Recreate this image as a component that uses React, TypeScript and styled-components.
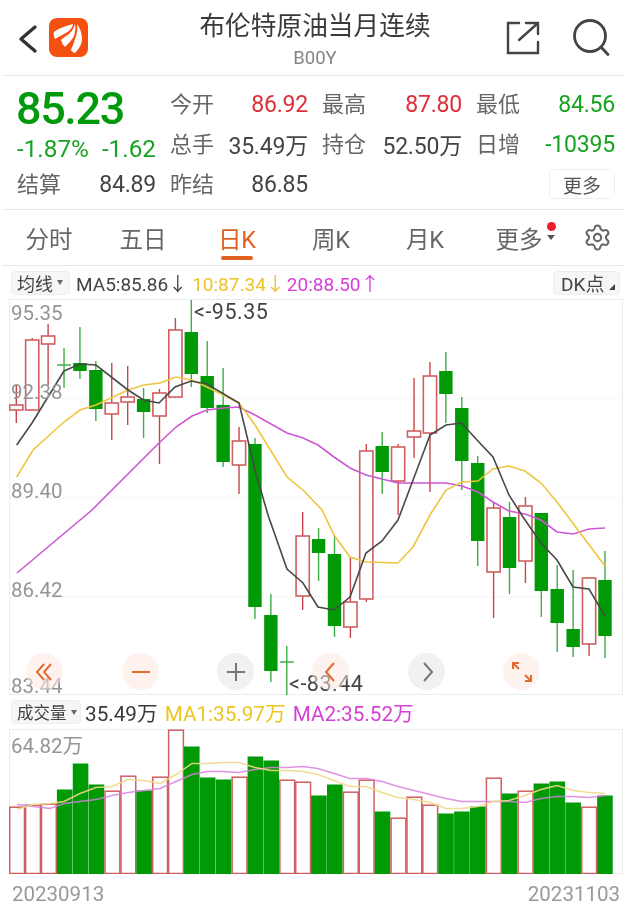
import React from 'react';
import styled, { createGlobalStyle } from 'styled-components';
import { Settings } from 'lucide-react';

const CJK = '"Roboto", "Noto Sans CJK SC", sans-serif';

const Global = createGlobalStyle`
  html, body { margin: 0; padding: 0; background: #fff; }
  body { font-family: ${CJK}; color: #333; }
`;

const Page = styled.div`
  width: 625px;
  height: 917px;
  overflow: hidden;
  display: flex;
  flex-direction: column;
  filter: blur(0.35px);
`;

/* ---------- header ---------- */
const Header = styled.header`
  height: 75px;
  margin-left: 3px;
  display: flex;
  align-items: center;
  border-bottom: 1px solid #e6e6e6;
  padding-left: 14px;
  flex-shrink: 0;
`;
const BackIcon = styled.svg`
  width: 24px;
  height: 32px;
  margin-right: 8px;
`;
const Logo = styled.svg`
  width: 39px;
  height: 39px;
`;
const TitleBlock = styled.div`
  width: 364px;
  margin-left: 45px;
  margin-right: -2px;
  text-align: center;
`;
const Title = styled.div`
  font-size: 25.7px;
  line-height: 41px;
  color: #3a3a3a;
`;
const Code = styled.div`
  font-size: 18.5px;
  line-height: 23px;
  color: #858585;
`;
const ShareIcon = styled.svg`
  width: 34px;
  height: 34px;
  margin-left: 11px;
`;
const SearchIcon = styled.svg`
  width: 40px;
  height: 40px;
  margin-left: 31px;
`;

/* ---------- quote ---------- */
const Quote = styled.section`
  margin-left: 3px;
  height: 134px;
  box-sizing: border-box;
  padding: 8px 0 0 14px;
  display: grid;
  grid-template-columns: 139px 138px 140px 139px;
  grid-template-rows: 40px 40px 40px;
  column-gap: 14px;
  border-bottom: 1px solid #e6e6e6;
  flex-shrink: 0;
`;
const QuoteLeft = styled.div`
  grid-row: 1 / span 2;
  grid-column: 1;
  display: flex;
  flex-direction: column;
  padding-top: 2px;
`;
const Price = styled.div`
  font-size: 45px;
  line-height: 46px;
  font-weight: 500;
  color: #009a0c;
  letter-spacing: -1.4px;
  margin-left: -1px;
`;
const DeltaRow = styled.div`
  display: flex;
  justify-content: space-between;
  height: 34px;
  align-items: center;
  font-size: 24.3px;
  color: #18a322;
`;
const Stat = styled.div`
  display: flex;
  justify-content: space-between;
  align-items: center;
  height: 40px;
`;
const StatLabel = styled.span`
  font-size: 22px;
  color: #666;
  margin-bottom: 4px;
`;
const StatValue = styled.span<{ $tone?: 'up' | 'down' }>`
  font-size: 23px;
  letter-spacing: -0.2px;
  color: ${p => (p.$tone === 'up' ? '#dc3038' : p.$tone === 'down' ? '#18a322' : '#444')};
`;
const MoreCell = styled.div`
  grid-column: 4;
  grid-row: 3;
  display: flex;
  justify-content: flex-end;
  align-items: center;
`;
const MoreButton = styled.button`
  width: 66px;
  height: 30px;
  padding: 0;
  background: #fff;
  border: 1px solid #eee;
  border-radius: 5px;
  font: 400 19px ${CJK};
  color: #555;
`;

/* ---------- tabs ---------- */
const Tabs = styled.nav`
  margin-left: 2px;
  height: 55px;
  display: flex;
  align-items: center;
  border-bottom: 1px solid #e6e6e6;
  flex-shrink: 0;
`;
const Tab = styled.div<{ $active?: boolean }>`
  position: relative;
  width: 94px;
  height: 55px;
  display: flex;
  align-items: center;
  justify-content: center;
  font-size: 23.5px;
  color: ${p => (p.$active ? '#e0601f' : '#666')};
  ${p =>
    p.$active &&
    `&::after {
      content: '';
      position: absolute;
      left: 31px;
      width: 32px;
      bottom: 5px;
      height: 4px;
      border-radius: 2px;
      background: #e0601f;
    }`}
`;
const RedDot = styled.span`
  position: absolute;
  left: 75px;
  top: 12px;
  width: 9px;
  height: 9px;
  border-radius: 50%;
  background: #e8202a;
`;
const TabCaret = styled.span`
  position: absolute;
  left: 75px;
  top: 25px;
  width: 0;
  height: 0;
  border-left: 4px solid transparent;
  border-right: 4px solid transparent;
  border-top: 5px solid #555;
`;
const GearWrap = styled.div`
  margin-left: 17px;
  display: flex;
  color: #666;
`;

/* ---------- legend rows ---------- */
const LegendRow = styled.div<{ $h: number }>`
  height: ${p => p.$h}px;
  display: flex;
  align-items: center;
  padding-left: 11px;
  flex-shrink: 0;
  white-space: nowrap;
`;
const Picker = styled.div<{ $w: number; $fs: number }>`
  width: ${p => p.$w}px;
  height: 24px;
  box-sizing: border-box;
  display: flex;
  align-items: center;
  padding-left: 5px;
  background: #f6f6f6;
  border: 1px solid #eee;
  border-radius: 4px;
  font-size: ${p => p.$fs}px;
  color: #444;
`;
const PickerCaret = styled.span`
  margin-left: 4px;
  width: 0;
  height: 0;
  border-left: 3.5px solid transparent;
  border-right: 3.5px solid transparent;
  border-top: 5px solid #666;
`;
const Legend = styled.span<{ $c: string; $fs: number; $ml: number }>`
  font-size: ${p => p.$fs}px;
  color: ${p => p.$c};
  margin-left: ${p => p.$ml}px;
`;
const KPoint = styled.div`
  position: relative;
  margin-left: auto;
  margin-right: 5px;
  width: 67px;
  height: 24px;
  box-sizing: border-box;
  padding-left: 7px;
  display: flex;
  align-items: center;
  background: #f6f6f6;
  border: 1px solid #eee;
  border-radius: 4px;
  font-size: 19px;
  color: #444;
  &::after {
    content: '';
    position: absolute;
    right: 4px;
    bottom: 4px;
    width: 0;
    height: 0;
    border-left: 6px solid transparent;
    border-bottom: 6px solid #444;
  }
`;

/* ---------- charts ---------- */
const ChartFrame = styled.div<{ $h: number }>`
  position: relative;
  margin-left: 9px;
  width: 614px;
  height: ${p => p.$h}px;
  box-sizing: border-box;
  border: 1px solid #ececec;
  flex-shrink: 0;
`;
const ChartSvg = styled.svg`
  position: absolute;
  left: -1px;
  top: -1px;
  overflow: hidden;
`;
const AxisLabel = styled.span<{ $y: number }>`
  position: absolute;
  left: 1px;
  top: ${p => p.$y - 13}px;
  line-height: 26px;
  font-size: 20.5px;
  color: #959595;
`;
const PeakLabel = styled.span<{ $x: number; $y: number }>`
  position: absolute;
  left: ${p => p.$x}px;
  top: ${p => p.$y - 13}px;
  line-height: 26px;
  font-size: 21.5px;
  letter-spacing: 0.5px;
  color: #444;
`;
const RoundButton = styled.div<{ $x: number; $accent: boolean }>`
  position: absolute;
  left: ${p => p.$x - 18}px;
  top: 353px;
  width: 37px;
  height: 37px;
  border-radius: 50%;
  background: ${p => (p.$accent ? 'rgba(252,232,222,0.55)' : 'rgba(232,232,232,0.6)')};
  color: ${p => (p.$accent ? '#e46a2e' : '#777')};
  display: flex;
  align-items: center;
  justify-content: center;
`;
const AxisRow = styled.div`
  height: 40px;
  padding: 0 5px 0 12px;
  display: flex;
  align-items: center;
  justify-content: space-between;
  font-size: 20.5px;
  color: #999;
  flex-shrink: 0;
`;

/* ---------- data ---------- */
type C = [0 | 1, number, number, number, number];
const candles: C[] = [
  [1, 385, 405, 410, 423], [1, 338, 340, 410, 410], [1, 324, 336, 344, 385], [0, 348, 365, 365, 388],
  [0, 327, 363, 371, 379], [0, 361, 370, 409, 421], [1, 363, 403, 414, 440], [1, 366, 397, 402, 425],
  [0, 388, 399, 412, 438], [1, 389, 393, 416, 464], [1, 318, 330, 397, 397], [0, 300, 332, 374, 387],
  [0, 341, 376, 408, 413], [0, 368, 405, 462, 467], [1, 427, 441, 465, 494], [0, 438, 444, 607, 619],
  [0, 594, 615, 671, 682], [0, 646, 662, 662, 695], [1, 512, 536, 596, 610], [0, 528, 539, 553, 581],
  [0, 536, 554, 626, 637], [1, 557, 602, 627, 638], [1, 444, 451, 599, 602], [0, 432, 446, 472, 494],
  [1, 444, 447, 481, 515], [1, 378, 431, 437, 458], [1, 362, 376, 433, 492], [0, 352, 371, 394, 423],
  [0, 397, 408, 461, 490], [0, 456, 463, 541, 566], [1, 502, 508, 572, 618], [0, 502, 517, 568, 594],
  [1, 497, 506, 561, 583], [0, 513, 513, 591, 617], [0, 565, 589, 623, 652], [0, 570, 629, 647, 657],
  [1, 577, 578, 644, 656], [0, 551, 580, 636, 658],
];
const cx = (i: number) => 16.3 + 15.91 * i;

const ma5 = '16.7,445 32,423 64,371 80,364 96,365 128,390 143.5,400 159,403 175,387 191,381 207,384 239,403 255,470 268,515 287,569 303,583 318,607 334,610 350,597 366,553 382,541 398,520 430,435 446,425 461.5,423 477,440 493,457 509,495 523,517 541,543 557,560 573,587 589,589 605,616';
const ma10 = '16.7,477 33,450 64,422 80,410 96,405 128,390 144,385 160,383 176,377 192,380 207,387 239,403 255,425 287,477 303,490 322,510 334,535 350,557 366,562 398,563 413,547 430,515 446,490 462,482 478,481 493,469 509,466 525,471 541,483 557,502 563,510 605,566';
const ma20 = '17,573 92,510 160,442 176,427 192,416 207,410 223,408 239,407 255,415 287,433 303,438 318,445 334,457 350,468 366,475 398,483 430,483 446,483 462,486 478,492 493,502 509,511 525,514 541,520 557,532 573,534 589,529 605,528';

const vols: [0 | 1, number][] = [
  [1, 807], [1, 805], [1, 804], [0, 790], [0, 764], [0, 785], [1, 791], [1, 776], [0, 791], [1, 777],
  [1, 730], [0, 747], [0, 778], [0, 780], [1, 777], [0, 757], [0, 761], [1, 780], [1, 782], [0, 796],
  [0, 785], [1, 792], [1, 780], [0, 812], [1, 818], [1, 797], [1, 805], [0, 814], [0, 812], [0, 807],
  [1, 778], [0, 794], [1, 791], [0, 784], [0, 782], [0, 803], [1, 807], [0, 796],
];
const vx = (i: number) => 17 + 15.89 * i;
const volA = '17,810 33,805 50,804 64,802 80,794 96,788 112,787 128,780 144,781 160,784 176,775 192,764 207,764 223,763 239,763 255,768 271,771 287,771 303,772 318,775 334,781 350,787 366,787 382,793 398,798 414,800 430,803 446,809 462,809 478,807 493,802 509,801 525,796 541,790 557,786 573,791 589,793 605,794';
const volB = '17,805 33,807 50,809 64,804 80,802 96,800 112,796 128,793 144,791 160,789 176,782 192,775 207,772 223,772 239,773 255,770 271,768 287,768 303,767 318,769 334,774 350,779 366,779 382,782 398,787 414,791 430,795 446,799 462,802 478,802 493,802 509,802 525,803 541,799 557,797 573,797 589,798 605,796';

const RED = '#cf5f60';
const WICK = '#c9444a';
const GREEN = '#009a06';
const WICKG = '#3fae48';

const Glyph = styled.svg`
  width: 24px;
  height: 24px;
  fill: none;
  stroke: currentColor;
  stroke-width: 2;
`;

const buttons: { x: number; accent: boolean; d: string }[] = [
  { x: 34, accent: true, d: 'M11 4 4 12l7 8M18 4l-7 8 7 8' },
  { x: 130, accent: true, d: 'M3 12h18' },
  { x: 225, accent: false, d: 'M3 12h18M12 3v18' },
  { x: 320, accent: true, d: 'M15 3l-8 9 8 9' },
  { x: 416, accent: false, d: 'M9 3l8 9-8 9' },
  { x: 511, accent: true, d: 'M3 9V3h6M3 3l6 6M21 15v6h-6M21 21l-6-6' },
];

export default function App() {
  return (
    <Page>
      <Global />
      <Header>
        <BackIcon viewBox="0 0 24 32" fill="none" stroke="#333" strokeWidth="3.4" strokeLinecap="round" strokeLinejoin="round">
          <path d="M18 5 4 17l14 12" />
        </BackIcon>
        <Logo viewBox="0 0 39 39">
          <rect width="39" height="39" rx="8" fill="#f4500f" />
          <path d="M24 6C17 8 10 10 5 14c-1 2 0 5 1 7 5-3 11-6 14-8 2-2 4-5 4-7Z" fill="#fff" />
          <path d="M26 6c-1 4-3 7-6 10-3 2-6 4-8 6 1 3 2 5 4 7 3-3 7-7 9-11 1-4 2-8 1-12Z" fill="#fff" />
          <path d="M28 6c1 5 0 10-2 15-1 4-3 8-4 11 1 2 3 3 4 3 4-4 7-9 7-14 0-6-2-11-5-15Z" fill="#fff" />
        </Logo>
        <TitleBlock>
          <Title>布伦特原油当月连续</Title>
          <Code>B00Y</Code>
        </TitleBlock>
        <ShareIcon viewBox="0 0 34 34" fill="none" stroke="#444" strokeWidth="2.4" strokeLinecap="round">
          <path d="M13 2H2v30h30V21" />
          <path d="M13 19 32 2M20 2h12v11" />
        </ShareIcon>
        <SearchIcon viewBox="0 0 40 40" fill="none" stroke="#444" strokeWidth="2.8" strokeLinecap="round">
          <circle cx="19" cy="18" r="15.5" />
          <path d="M30 29l7 7.5" />
        </SearchIcon>
      </Header>

      <Quote>
        <QuoteLeft>
          <Price>85.23</Price>
          <DeltaRow>
            <span>-1.87%</span>
            <span>-1.62</span>
          </DeltaRow>
        </QuoteLeft>
        <Stat><StatLabel>今开</StatLabel><StatValue $tone="up">86.92</StatValue></Stat>
        <Stat><StatLabel>最高</StatLabel><StatValue $tone="up">87.80</StatValue></Stat>
        <Stat><StatLabel>最低</StatLabel><StatValue $tone="down">84.56</StatValue></Stat>
        <Stat><StatLabel>总手</StatLabel><StatValue>35.49万</StatValue></Stat>
        <Stat><StatLabel>持仓</StatLabel><StatValue>52.50万</StatValue></Stat>
        <Stat><StatLabel>日增</StatLabel><StatValue $tone="down">-10395</StatValue></Stat>
        <Stat><StatLabel>结算</StatLabel><StatValue>84.89</StatValue></Stat>
        <Stat><StatLabel>昨结</StatLabel><StatValue>86.85</StatValue></Stat>
        <MoreCell><MoreButton>更多</MoreButton></MoreCell>
      </Quote>

      <Tabs>
        <Tab>分时</Tab>
        <Tab>五日</Tab>
        <Tab $active>日K</Tab>
        <Tab>周K</Tab>
        <Tab>月K</Tab>
        <Tab>更多<RedDot /><TabCaret /></Tab>
        <GearWrap><Settings size={29} strokeWidth={1.7} /></GearWrap>
      </Tabs>

      <LegendRow $h={33}>
        <Picker $w={59} $fs={18}>均线<PickerCaret /></Picker>
        <Legend $c="#444" $fs={19} $ml={6}>MA5:85.86↓</Legend>
        <Legend $c="#eec22a" $fs={19} $ml={5}>10:87.34↓</Legend>
        <Legend $c="#d63fd6" $fs={19} $ml={2}>20:88.50↑</Legend>
        <KPoint>DK点</KPoint>
      </LegendRow>

      <ChartFrame $h={396}>
        <ChartSvg width="614" height="396" viewBox="9 299 614 396">
          {[398.5, 498, 597].map(y => (
            <line key={y} x1="10" x2="622" y1={y} y2={y} stroke="#eee" strokeWidth="1" strokeDasharray="2 2" />
          ))}
          {candles.map(([up, wt, bt, bb, wb], i) => {
            const x = cx(i);
            return (
              <g key={i}>
                <line x1={x} x2={x} y1={wt} y2={wb} stroke={up ? WICK : WICKG} strokeWidth="1.4" />
                {bt === bb ? (
                  <line x1={x - 7} x2={x + 7} y1={bt} y2={bt} stroke={WICKG} strokeWidth="1.5" />
                ) : up ? (
                  <rect x={x - 6.6} y={bt} width="13.2" height={bb - bt} fill="#fff" stroke={RED} strokeWidth="1.6" />
                ) : (
                  <rect x={x - 6.7} y={bt} width="13.4" height={bb - bt} fill={GREEN} />
                )}
              </g>
            );
          })}
          <polyline points={ma20} fill="none" stroke="#cc58d4" strokeWidth="1.6" />
          <polyline points={ma10} fill="none" stroke="#eec640" strokeWidth="1.6" />
          <polyline points={ma5} fill="none" stroke="#484848" strokeWidth="1.6" />
        </ChartSvg>
        <AxisLabel $y={13}>95.35</AxisLabel>
        <AxisLabel $y={92}>92.38</AxisLabel>
        <AxisLabel $y={191}>89.40</AxisLabel>
        <AxisLabel $y={290}>86.42</AxisLabel>
        <AxisLabel $y={386}>83.44</AxisLabel>
        <PeakLabel $x={184} $y={12}>&lt;-95.35</PeakLabel>
        <PeakLabel $x={279} $y={384}>&lt;-83.44</PeakLabel>
        {buttons.map(b => (
          <RoundButton key={b.x} $x={b.x} $accent={b.accent}>
            <Glyph viewBox="0 0 24 24"><path d={b.d} /></Glyph>
          </RoundButton>
        ))}
      </ChartFrame>

      <LegendRow $h={34}>
        <Picker $w={70} $fs={16.5}>成交量<PickerCaret /></Picker>
        <Legend $c="#3a3a3a" $fs={20.7} $ml={4}>35.49万</Legend>
        <Legend $c="#ecc524" $fs={20.7} $ml={7}>MA1:35.97万</Legend>
        <Legend $c="#d63fd6" $fs={20.7} $ml={7}>MA2:35.52万</Legend>
      </LegendRow>

      <ChartFrame $h={145}>
        <ChartSvg width="614" height="145" viewBox="9 729.5 614 145">
          {vols.map(([up, top], i) =>
            up ? (
              <rect key={i} x={vx(i) - 7.3} y={top + 0.7} width="14.8" height={874 - top - 0.7} fill="#fff" stroke={RED} strokeWidth="1.5" />
            ) : (
              <rect key={i} x={vx(i) - 7.8} y={top} width="15.6" height={874.7 - top} fill={GREEN} />
            )
          )}
          <polyline points={volB} fill="none" stroke="#d880de" strokeOpacity="0.85" strokeWidth="1.5" />
          <polyline points={volA} fill="none" stroke="#efd888" strokeOpacity="0.9" strokeWidth="1.5" />
        </ChartSvg>
        <AxisLabel $y={16}>64.82万</AxisLabel>
      </ChartFrame>

      <AxisRow>
        <span>20230913</span>
        <span>20231103</span>
      </AxisRow>
    </Page>
  );
}
